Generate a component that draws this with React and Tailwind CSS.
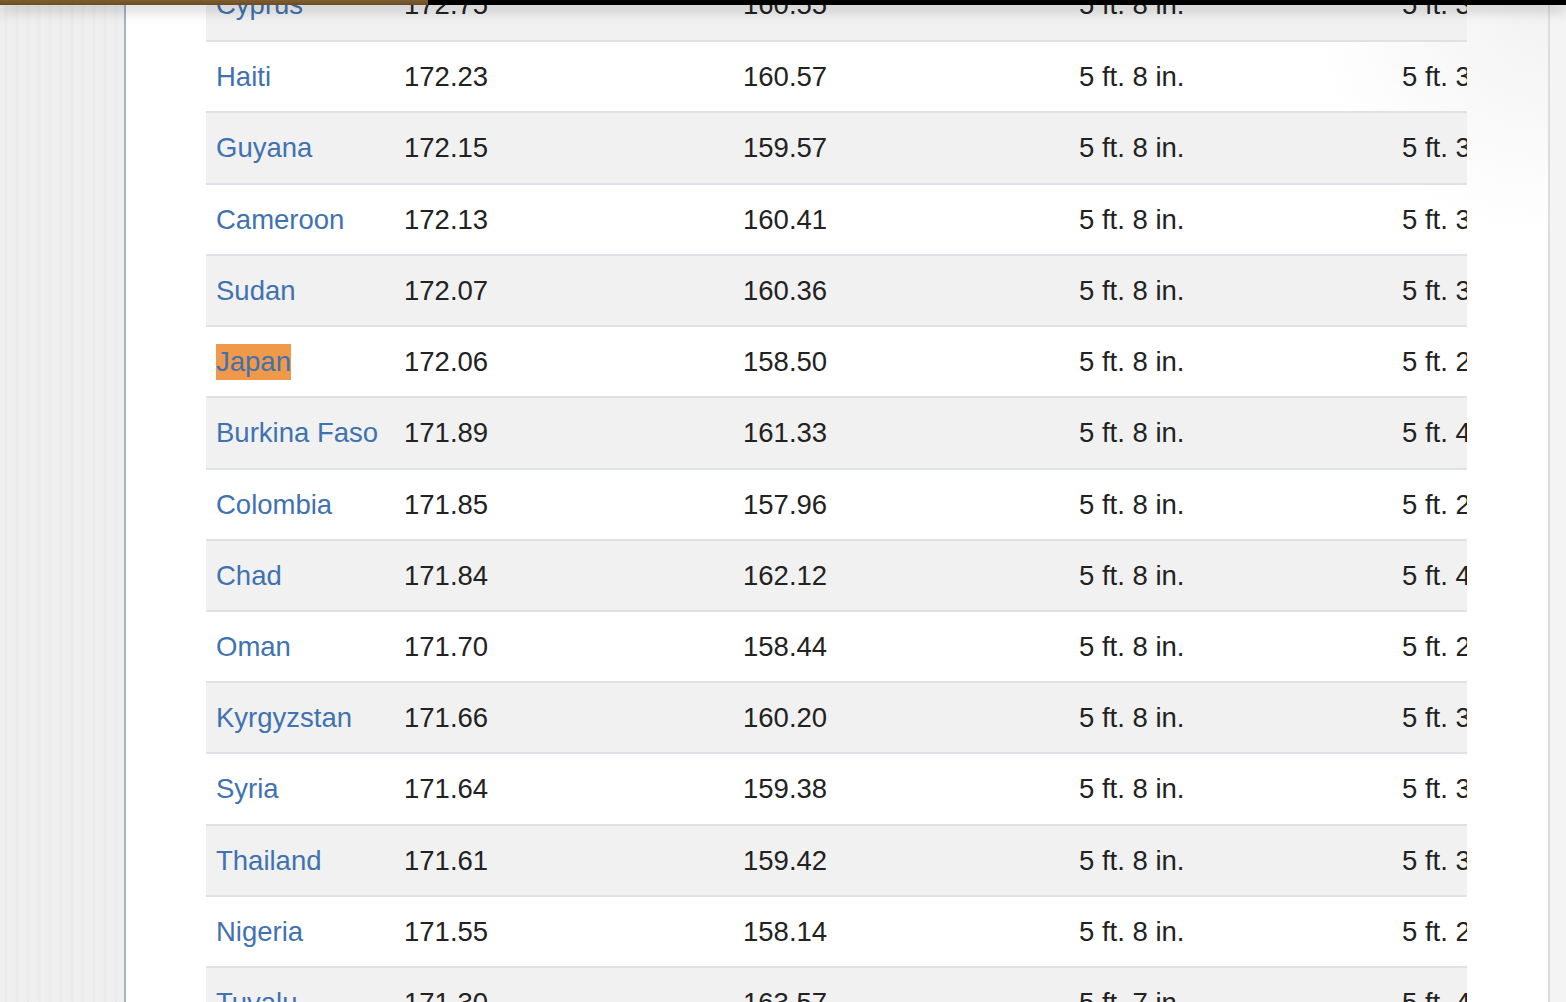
import React from "react";

const rows = [
  ["Cyprus", "172.75", "160.55", "5 ft. 8 in.", "5 ft. 3 in."],
  ["Haiti", "172.23", "160.57", "5 ft. 8 in.", "5 ft. 3 in."],
  ["Guyana", "172.15", "159.57", "5 ft. 8 in.", "5 ft. 3 in."],
  ["Cameroon", "172.13", "160.41", "5 ft. 8 in.", "5 ft. 3 in."],
  ["Sudan", "172.07", "160.36", "5 ft. 8 in.", "5 ft. 3 in."],
  ["Japan", "172.06", "158.50", "5 ft. 8 in.", "5 ft. 2 in."],
  ["Burkina Faso", "171.89", "161.33", "5 ft. 8 in.", "5 ft. 4 in."],
  ["Colombia", "171.85", "157.96", "5 ft. 8 in.", "5 ft. 2 in."],
  ["Chad", "171.84", "162.12", "5 ft. 8 in.", "5 ft. 4 in."],
  ["Oman", "171.70", "158.44", "5 ft. 8 in.", "5 ft. 2 in."],
  ["Kyrgyzstan", "171.66", "160.20", "5 ft. 8 in.", "5 ft. 3 in."],
  ["Syria", "171.64", "159.38", "5 ft. 8 in.", "5 ft. 3 in."],
  ["Thailand", "171.61", "159.42", "5 ft. 8 in.", "5 ft. 3 in."],
  ["Nigeria", "171.55", "158.14", "5 ft. 8 in.", "5 ft. 2 in."],
  ["Tuvalu", "171.30", "163.57", "5 ft. 7 in.", "5 ft. 4 in."],
];

export default function App() {
  return (
    <div
      className="relative w-[1566px] h-[1002px] overflow-hidden flex text-[27.5px] text-[#222222]"
      style={{ fontFamily: '"Liberation Sans", Arial, sans-serif' }}
    >
      <div className="w-[124px] shrink-0 bg-[#eeeeee] bg-[repeating-linear-gradient(90deg,#efefef_0px,#efefef_4px,#eaeaea_6px,#efefef_8px,#f0f0f0_11px)]" />
      <div className="w-[2px] shrink-0 bg-[#a4b3c7]" />
      <div className="w-[1422px] shrink-0 bg-[radial-gradient(circle_at_100%_0%,#f2f2f2_0px,#ffffff_240px)] pl-[80px]">
        <div className="w-[1261px] overflow-hidden mt-[-31px]">
          {rows.map((r, i) => (
            <div
              key={r[0]}
              className={`grid grid-cols-[188px_339px_336px_323px_200px] items-center h-[71.23px] ${
                i > 0 ? "border-t-2 border-[#dee2e6]" : ""
              } ${i % 2 === 0 ? "bg-[#f1f1f1]" : ""}`}
            >
              <div className="pl-[10px] whitespace-nowrap">
                {r[0] === "Japan" ? (
                  <span className="inline-block bg-[#f0994a] text-[#3f72b0] leading-[36px]">Japan</span>
                ) : (
                  <span className="text-[#3f72b0]">{r[0]}</span>
                )}
              </div>
              <div className="pl-[10px] whitespace-nowrap">{r[1]}</div>
              <div className="pl-[10px] whitespace-nowrap">{r[2]}</div>
              <div className="pl-[10px] whitespace-nowrap">{r[3]}</div>
              <div className="pl-[10px] whitespace-nowrap">{r[4]}</div>
            </div>
          ))}
        </div>
      </div>
      <div className="w-[2px] shrink-0 bg-[#dddddd]" />
      <div className="flex-1 bg-[#f4f4f4]" />

      <div className="absolute top-0 left-0 right-0 h-[5px] flex shadow-[0_4px_14px_rgba(0,0,0,0.35)]">
        <div className="w-[428px] bg-[linear-gradient(180deg,#7e5e30,#6b4d24)]" />
        <div className="flex-1 bg-black" />
      </div>
    </div>
  );
}
